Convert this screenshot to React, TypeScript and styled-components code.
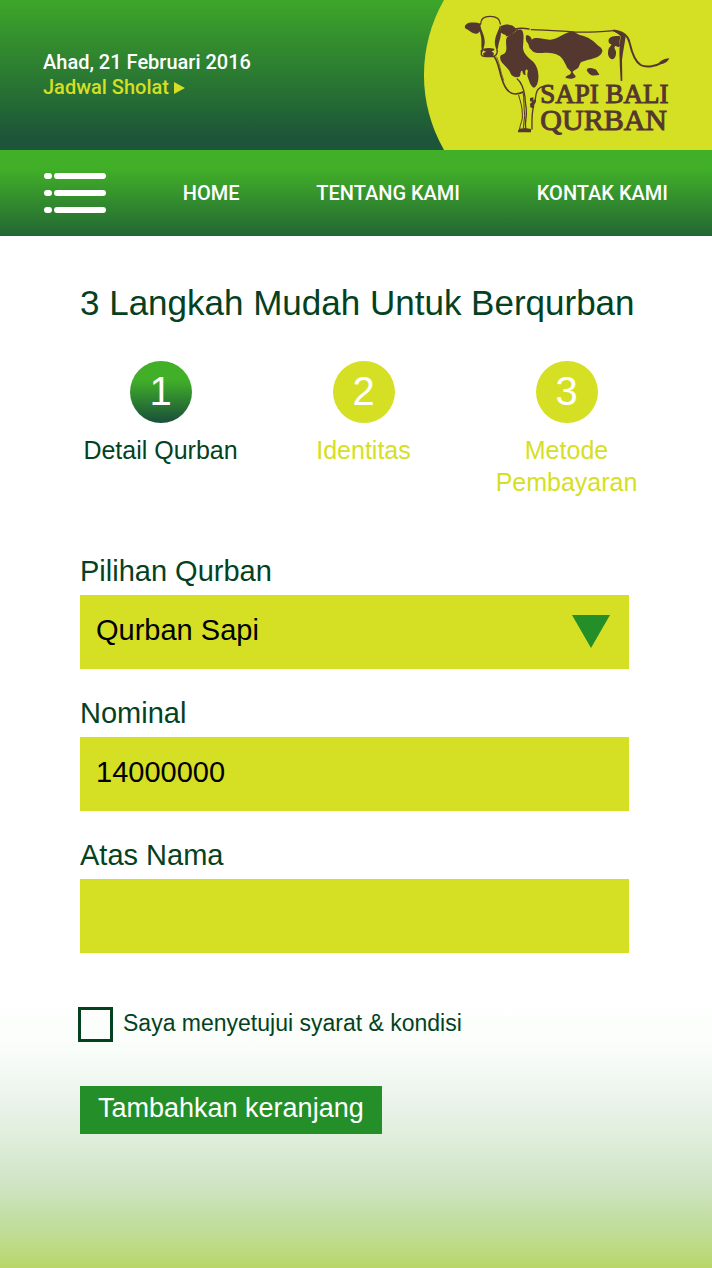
import React, { useState } from "react";
import styled, { createGlobalStyle, css } from "styled-components";

const lime = "#d5df23";
const forest = "#04421f";
const leaf = "#248f29";
const brown = "#54372e";
const sans = `"Liberation Sans", Arial, sans-serif`;
const display = `Roboto, "Noto Sans", sans-serif`;

const GlobalStyle = createGlobalStyle`
  *, *::before, *::after { box-sizing: border-box; }
  body { margin: 0; background: #fff; font-family: ${sans}; color: ${forest}; }
  h1, ol { margin: 0; padding: 0; }
  button, input, select { font: inherit; border: 0; border-radius: 0; margin: 0; }
`;

const Page = styled.div`
  min-height: 100vh;
  display: flex;
  flex-direction: column;
  background: linear-gradient(
    to top,
    #b9d66a 0,
    #bedb88 24px,
    #c3dea4 50px,
    #d0e5c6 86px,
    #e1efde 136px,
    #edf4ed 174px,
    #f9fdf9 218px,
    #fff 270px
  );
`;

const Header = styled.header`
  display: flex;
  justify-content: space-between;
  height: 150px;
  background: linear-gradient(#3da629 0, #1c5539 138px);
  font-family: ${display};
`;

const DateBlock = styled.div`
  display: flex;
  flex-direction: column;
  padding: 50px 0 0 43px;
  font-size: 20px;
  font-weight: 500;
  line-height: 25px;
  color: #fff;
`;

const ScheduleLink = styled.a`
  display: flex;
  align-items: center;
  gap: 5px;
  color: ${lime};
  text-decoration: none;
`;

const LogoLink = styled.a`
  display: block;
  flex: none;
  height: 150px;
`;

const Nav = styled.nav`
  display: flex;
  align-items: center;
  justify-content: space-between;
  height: 86px;
  padding: 0 44px;
  background: linear-gradient(#41b028 0, #41b028 18px, #236634 100%);
  font-family: ${display};
`;

const MenuButton = styled.button`
  display: flex;
  padding: 0;
  background: none;
  cursor: pointer;
`;

const NavLink = styled.a`
  color: #fff;
  font-size: 20px;
  font-weight: 500;
  line-height: 25px;
  text-decoration: none;
`;

const Title = styled.h1`
  padding: 43px 40px 0 80px;
  font-size: 35px;
  font-weight: 400;
  line-height: 48px;
`;

const Steps = styled.ol`
  display: grid;
  grid-template-columns: repeat(3, 1fr);
  padding: 34px 44px 0 59px;
  list-style: none;
`;

const Step = styled.li<{ $active?: boolean }>`
  display: flex;
  flex-direction: column;
  align-items: center;
  gap: 11px;
  color: ${(p) => (p.$active ? forest : lime)};
  font-size: 25px;
  line-height: 32px;
  text-align: center;
`;

const StepNumber = styled.span<{ $active?: boolean }>`
  display: grid;
  place-items: center;
  width: 62px;
  height: 62px;
  padding-bottom: 2px;
  border-radius: 50%;
  background: ${(p) => (p.$active ? "linear-gradient(#41b028 30%, #1c5539 95%)" : lime)};
  color: #fff;
  font-size: 40px;
`;

const Form = styled.form`
  display: flex;
  flex-direction: column;
  gap: 20px;
  padding: 49px 83px 134px 80px;
`;

const Field = styled.div`
  display: flex;
  flex-direction: column;
`;

const FieldLabel = styled.label`
  font-size: 29px;
  line-height: 48px;
`;

const control = css`
  width: 100%;
  height: 74px;
  padding: 0 16px 4px;
  background: ${lime};
  color: #000;
  font-size: 29px;
`;

const TextInput = styled.input`
  ${control}
`;

const SelectWrap = styled.div`
  display: grid;
  align-items: center;

  > * {
    grid-area: 1 / 1;
  }

  > svg {
    justify-self: end;
    margin-right: 19px;
    pointer-events: none;
  }
`;

const Select = styled.select`
  ${control}
  appearance: none;
`;

const Agreement = styled.label`
  display: flex;
  align-items: center;
  gap: 10px;
  margin: 34px 0 0 -2px;
  font-size: 23px;
  line-height: 32px;

  span {
    padding-bottom: 3px;
  }
`;

const Checkbox = styled.input`
  appearance: none;
  flex: none;
  width: 35px;
  height: 35px;
  border: 3px solid ${forest};
  background: transparent;

  &:checked {
    background: ${leaf};
    box-shadow: inset 0 0 0 4px #fff;
  }
`;

const Submit = styled.button`
  align-self: flex-start;
  height: 48px;
  margin-top: 24px;
  padding: 0 18px 4px;
  background: ${leaf};
  color: #fff;
  font-size: 27px;
  cursor: pointer;
`;

function Logo() {
  return (
    <svg width="292" height="150" viewBox="0 0 876 450" role="img" aria-label="Sapi Bali Qurban">
      <path d="M72 0A451 451 0 0 0 72 450H876V0Z" fill={lime} />
      <g fill={brown}>
        {/* ears */}
        <path d="M183 72C171 67 148 66 140 72C133 77 133 84 139 87C149 90 155 102 170 101C177 100 181 94 183 87C180 82 180 77 183 72Z" />
        <path d="M241 79C252 74 264 72 275 76C283 80 287 85 289 91C283 96 278 104 266 106C254 106 246 101 241 97Z" />
        {/* sides of the face and muzzle */}
        <path d="M181 76C183 92 193 103 194 123C195 136 190 143 188 158C181 145 187 123 182 106C180 96 177 88 181 76Z" />
        <path d="M240 76C244 92 244 108 239 121C234 135 236 143 230 154C228 142 223 136 225 121C227 105 235 94 240 76Z" />
        <path d="M190 146C199 143 213 143 222 146C226 149 220 153 214 154L222 160L219 170H192L189 160L199 155C192 153 186 150 190 146Z" />
        {/* shoulder patch */}
        <path d="M291 92C297 87 304 87 307 92C313 104 310 122 309 140C308 158 321 170 336 182C350 193 357 215 355 236C354 248 350 260 342 263C333 260 328 245 324 233C318 222 328 211 321 209C315 207 315 216 317 225C312 227 307 219 307 212C299 211 304 225 298 230C287 234 277 229 272 221C268 207 255 199 247 189C240 181 238 169 244 165C256 162 260 155 259 141C258 127 257 116 262 110C274 105 286 101 291 92Z" />
        {/* flank patch */}
        <path d="M319 106C326 103 335 112 335 119C350 108 370 120 391 119C414 117 426 103 453 94C464 94 471 103 482 106C506 111 522 124 533 136C544 143 551 152 545 159C538 172 524 173 513 178C501 180 494 184 484 186C477 191 480 202 470 207C462 212 456 214 459 218C462 224 467 226 467 230C462 237 444 239 436 232C440 225 452 225 453 218C455 211 441 207 439 197C433 188 430 177 420 169C404 158 385 158 368 159C355 160 340 159 334 149C323 141 329 132 320 126C318 119 316 112 319 106Z" />
        <path d="M502 206C511 202 524 206 530 211C532 218 540 223 537 225C527 226 516 229 509 222C504 217 498 211 502 206Z" />
        {/* hind patches */}
        <path d="M567 116C574 107 590 107 601 109C599 120 598 129 600 137C594 147 588 134 584 140C581 146 590 151 588 159C588 170 583 178 576 178C566 176 562 162 565 151C566 141 575 138 574 133C566 131 564 123 567 116Z" />
        <path d="M578 89C593 89 610 97 617 109C614 132 609 154 606 180L607 242L602 243C601 219 599 200 599 180C597 153 599 130 602 109C598 103 588 98 578 92Z" />
        {/* tail tuft, fore leg patches and hoof */}
        <path d="M716 191C720 182 733 176 748 175C744 185 733 192 720 193Z" />
        <path d="M330 294L340 292L341 302L348 292V305L341 318L338 325L331 322L330 311L337 305L330 304Z" />
        <path d="M298 386L316 384L333 387V397H294C293 393 295 389 298 386Z" />
      </g>
      <g fill="none" stroke={brown} strokeWidth="4" strokeLinecap="round" strokeLinejoin="round">
        {/* head and back */}
        <path d="M182 72C182 55 193 49 210 49C228 49 240 56 241 72" />
        <path d="M184 151V164Q187 170 197 170H219Q232 168 232 151" />
        <path d="M259 107C275 106 290 99 292 90M284 87C298 84 312 84 327 87" />
        <path d="M334 89C374 90 416 93 450 95C488 99 532 96 582 92" />
        {/* chest and fore legs */}
        <path d="M223 170C235 187 237 208 244 231C252 260 266 282 286 282Q300 281 309 276" strokeWidth="5" />
        <path d="M230 171C240 190 240 213 251 241" strokeWidth="2" />
        <path d="M292 237C305 248 312 270 315 291C314 307 320 319 319 337C320 351 314 365 317 384" />
        <path d="M309 276C313 297 311 322 314 347L310 384M296 286C301 304 307 320 307 342C310 359 300 372 299 386" strokeWidth="3" />
        <path d="M341 318C334 342 336 368 336 387" />
        <path d="M346 296C348 276 352 262 371 259" />
        {/* tail */}
        <path d="M584 92C610 96 625 107 629 129C635 156 646 185 662 195C676 203 704 201 726 188" strokeWidth="6" />
      </g>
      <g
        fill={brown}
        stroke={brown}
        strokeWidth="3"
        fontFamily={`"Liberation Serif", "Times New Roman", serif`}
      >
        <text x="361" y="310" fontSize="81">SAPI BALI</text>
        <text x="361" y="389" fontSize="90">QURBAN</text>
      </g>
    </svg>
  );
}

function MenuIcon() {
  return (
    <svg width="62" height="42" viewBox="0 0 62 42" fill="#fff" aria-hidden="true">
      {[1, 18, 35].map((y) => (
        <g key={y}>
          <rect x="0" y={y} width="8" height="6" rx="3" />
          <rect x="10" y={y} width="52" height="6" rx="3" />
        </g>
      ))}
    </svg>
  );
}

const steps = ["Detail Qurban", "Identitas", "Metode Pembayaran"];
const links = ["HOME", "TENTANG KAMI", "KONTAK KAMI"];

export default function App() {
  const [choice, setChoice] = useState("Qurban Sapi");
  const [amount, setAmount] = useState("14000000");
  const [name, setName] = useState("");
  const [agreed, setAgreed] = useState(false);

  return (
    <Page>
      <GlobalStyle />
      <Header>
        <DateBlock>
          <span>Ahad, 21 Februari 2016</span>
          <ScheduleLink href="#jadwal">
            Jadwal Sholat
            <svg width="12" height="14" viewBox="0 0 12 14" aria-hidden="true">
              <path d="M0 1L11 7L0 13Z" fill="currentColor" />
            </svg>
          </ScheduleLink>
        </DateBlock>
        <LogoLink href="#beranda">
          <Logo />
        </LogoLink>
      </Header>
      <Nav>
        <MenuButton type="button" aria-label="Menu">
          <MenuIcon />
        </MenuButton>
        {links.map((text) => (
          <NavLink key={text} href="#menu">
            {text}
          </NavLink>
        ))}
      </Nav>
      <main>
        <Title>3 Langkah Mudah Untuk Berqurban</Title>
        <Steps>
          {steps.map((text, i) => (
            <Step key={text} $active={i === 0}>
              <StepNumber $active={i === 0}>{i + 1}</StepNumber>
              {text}
            </Step>
          ))}
        </Steps>
        <Form onSubmit={(e) => e.preventDefault()}>
          <Field>
            <FieldLabel htmlFor="pilihan">Pilihan Qurban</FieldLabel>
            <SelectWrap>
              <Select id="pilihan" value={choice} onChange={(e) => setChoice(e.target.value)}>
                <option>Qurban Sapi</option>
              </Select>
              <svg width="38" height="34" viewBox="0 0 38 34" aria-hidden="true">
                <path d="M0 0H38L19 33Z" fill={leaf} />
              </svg>
            </SelectWrap>
          </Field>
          <Field>
            <FieldLabel htmlFor="nominal">Nominal</FieldLabel>
            <TextInput
              id="nominal"
              inputMode="numeric"
              value={amount}
              onChange={(e) => setAmount(e.target.value)}
            />
          </Field>
          <Field>
            <FieldLabel htmlFor="nama">Atas Nama</FieldLabel>
            <TextInput id="nama" value={name} onChange={(e) => setName(e.target.value)} />
          </Field>
          <Agreement>
            <Checkbox
              type="checkbox"
              checked={agreed}
              onChange={(e) => setAgreed(e.target.checked)}
            />
            <span>Saya menyetujui syarat &amp; kondisi</span>
          </Agreement>
          <Submit type="submit">Tambahkan keranjang</Submit>
        </Form>
      </main>
    </Page>
  );
}
